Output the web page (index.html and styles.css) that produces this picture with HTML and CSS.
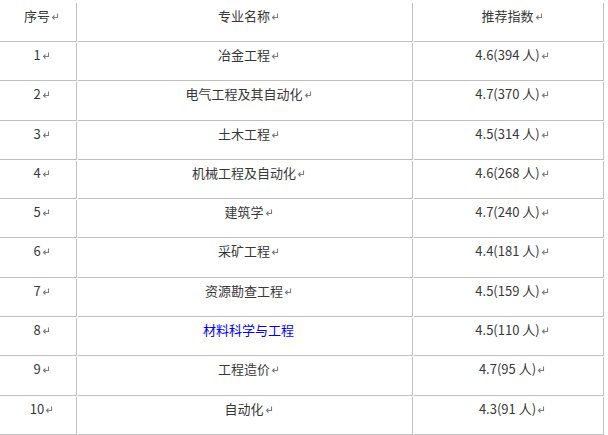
FILE: index.html
```html
<!DOCTYPE html>
<html lang="zh-CN">
<head>
<meta charset="utf-8">
<title>专业推荐</title>
<link rel="stylesheet" href="styles.css">
</head>
<body>
<div class="grid">
  <div class="cell head">序号<svg class="pm" viewBox="0 0 8 7"><path d="M6.5 0.5V4.5H1.5M3.5 2.5L1.5 4.5L3.5 6.5"/></svg></div>
  <div class="cell head">专业名称<svg class="pm" viewBox="0 0 8 7"><path d="M6.5 0.5V4.5H1.5M3.5 2.5L1.5 4.5L3.5 6.5"/></svg></div>
  <div class="cell head">推荐指数<svg class="pm" viewBox="0 0 8 7"><path d="M6.5 0.5V4.5H1.5M3.5 2.5L1.5 4.5L3.5 6.5"/></svg></div>

  <div class="cell">1<svg class="pm" viewBox="0 0 8 7"><path d="M6.5 0.5V4.5H1.5M3.5 2.5L1.5 4.5L3.5 6.5"/></svg></div>
  <div class="cell">冶金工程<svg class="pm" viewBox="0 0 8 7"><path d="M6.5 0.5V4.5H1.5M3.5 2.5L1.5 4.5L3.5 6.5"/></svg></div>
  <div class="cell">4.6(394 人)<svg class="pm" viewBox="0 0 8 7"><path d="M6.5 0.5V4.5H1.5M3.5 2.5L1.5 4.5L3.5 6.5"/></svg></div>

  <div class="cell">2<svg class="pm" viewBox="0 0 8 7"><path d="M6.5 0.5V4.5H1.5M3.5 2.5L1.5 4.5L3.5 6.5"/></svg></div>
  <div class="cell">电气工程及其自动化<svg class="pm" viewBox="0 0 8 7"><path d="M6.5 0.5V4.5H1.5M3.5 2.5L1.5 4.5L3.5 6.5"/></svg></div>
  <div class="cell">4.7(370 人)<svg class="pm" viewBox="0 0 8 7"><path d="M6.5 0.5V4.5H1.5M3.5 2.5L1.5 4.5L3.5 6.5"/></svg></div>

  <div class="cell">3<svg class="pm" viewBox="0 0 8 7"><path d="M6.5 0.5V4.5H1.5M3.5 2.5L1.5 4.5L3.5 6.5"/></svg></div>
  <div class="cell">土木工程<svg class="pm" viewBox="0 0 8 7"><path d="M6.5 0.5V4.5H1.5M3.5 2.5L1.5 4.5L3.5 6.5"/></svg></div>
  <div class="cell">4.5(314 人)<svg class="pm" viewBox="0 0 8 7"><path d="M6.5 0.5V4.5H1.5M3.5 2.5L1.5 4.5L3.5 6.5"/></svg></div>

  <div class="cell">4<svg class="pm" viewBox="0 0 8 7"><path d="M6.5 0.5V4.5H1.5M3.5 2.5L1.5 4.5L3.5 6.5"/></svg></div>
  <div class="cell">机械工程及自动化<svg class="pm" viewBox="0 0 8 7"><path d="M6.5 0.5V4.5H1.5M3.5 2.5L1.5 4.5L3.5 6.5"/></svg></div>
  <div class="cell">4.6(268 人)<svg class="pm" viewBox="0 0 8 7"><path d="M6.5 0.5V4.5H1.5M3.5 2.5L1.5 4.5L3.5 6.5"/></svg></div>

  <div class="cell">5<svg class="pm" viewBox="0 0 8 7"><path d="M6.5 0.5V4.5H1.5M3.5 2.5L1.5 4.5L3.5 6.5"/></svg></div>
  <div class="cell">建筑学<svg class="pm" viewBox="0 0 8 7"><path d="M6.5 0.5V4.5H1.5M3.5 2.5L1.5 4.5L3.5 6.5"/></svg></div>
  <div class="cell">4.7(240 人)<svg class="pm" viewBox="0 0 8 7"><path d="M6.5 0.5V4.5H1.5M3.5 2.5L1.5 4.5L3.5 6.5"/></svg></div>

  <div class="cell">6<svg class="pm" viewBox="0 0 8 7"><path d="M6.5 0.5V4.5H1.5M3.5 2.5L1.5 4.5L3.5 6.5"/></svg></div>
  <div class="cell">采矿工程<svg class="pm" viewBox="0 0 8 7"><path d="M6.5 0.5V4.5H1.5M3.5 2.5L1.5 4.5L3.5 6.5"/></svg></div>
  <div class="cell">4.4(181 人)<svg class="pm" viewBox="0 0 8 7"><path d="M6.5 0.5V4.5H1.5M3.5 2.5L1.5 4.5L3.5 6.5"/></svg></div>

  <div class="cell">7<svg class="pm" viewBox="0 0 8 7"><path d="M6.5 0.5V4.5H1.5M3.5 2.5L1.5 4.5L3.5 6.5"/></svg></div>
  <div class="cell">资源勘查工程<svg class="pm" viewBox="0 0 8 7"><path d="M6.5 0.5V4.5H1.5M3.5 2.5L1.5 4.5L3.5 6.5"/></svg></div>
  <div class="cell">4.5(159 人)<svg class="pm" viewBox="0 0 8 7"><path d="M6.5 0.5V4.5H1.5M3.5 2.5L1.5 4.5L3.5 6.5"/></svg></div>

  <div class="cell">8<svg class="pm" viewBox="0 0 8 7"><path d="M6.5 0.5V4.5H1.5M3.5 2.5L1.5 4.5L3.5 6.5"/></svg></div>
  <div class="cell"><a class="link" href="#">材料科学与工程</a></div>
  <div class="cell">4.5(110 人)<svg class="pm" viewBox="0 0 8 7"><path d="M6.5 0.5V4.5H1.5M3.5 2.5L1.5 4.5L3.5 6.5"/></svg></div>

  <div class="cell">9<svg class="pm" viewBox="0 0 8 7"><path d="M6.5 0.5V4.5H1.5M3.5 2.5L1.5 4.5L3.5 6.5"/></svg></div>
  <div class="cell">工程造价<svg class="pm" viewBox="0 0 8 7"><path d="M6.5 0.5V4.5H1.5M3.5 2.5L1.5 4.5L3.5 6.5"/></svg></div>
  <div class="cell">4.7(95 人)<svg class="pm" viewBox="0 0 8 7"><path d="M6.5 0.5V4.5H1.5M3.5 2.5L1.5 4.5L3.5 6.5"/></svg></div>

  <div class="cell">10<svg class="pm" viewBox="0 0 8 7"><path d="M6.5 0.5V4.5H1.5M3.5 2.5L1.5 4.5L3.5 6.5"/></svg></div>
  <div class="cell">自动化<svg class="pm" viewBox="0 0 8 7"><path d="M6.5 0.5V4.5H1.5M3.5 2.5L1.5 4.5L3.5 6.5"/></svg></div>
  <div class="cell">4.3(91 人)<svg class="pm" viewBox="0 0 8 7"><path d="M6.5 0.5V4.5H1.5M3.5 2.5L1.5 4.5L3.5 6.5"/></svg></div>
</div>
</body>
</html>
```

FILE: styles.css
```css
html, body {
  margin: 0;
  padding: 0;
  background: #ffffff;
}

body {
  font-family: "Noto Sans CJK SC", "Noto Sans", sans-serif;
  font-size: 13px;
  color: #383838;
}

.grid {
  display: grid;
  grid-template-columns: 77px 335px 190px;
  grid-template-rows: 39px repeat(10, 38.3px);
  gap: 1px;
  margin-top: 3px;
  width: 604px;
}

.cell {
  box-sizing: border-box;
  border-right: 1px solid #c0c0c0;
  border-bottom: 1px solid #c0c0c0;
  text-align: center;
  padding: 2px 0 0 7px;
  line-height: 20px;
  white-space: nowrap;
}

.head {
  padding-top: 3px;
}

.pm {
  width: 8px;
  height: 7px;
  margin-left: 1px;
  vertical-align: 1px;
  fill: none;
  stroke: #7f7f7f;
  stroke-width: 1.1;
}

.link {
  color: #0000ff;
  text-decoration: none;
}
```
